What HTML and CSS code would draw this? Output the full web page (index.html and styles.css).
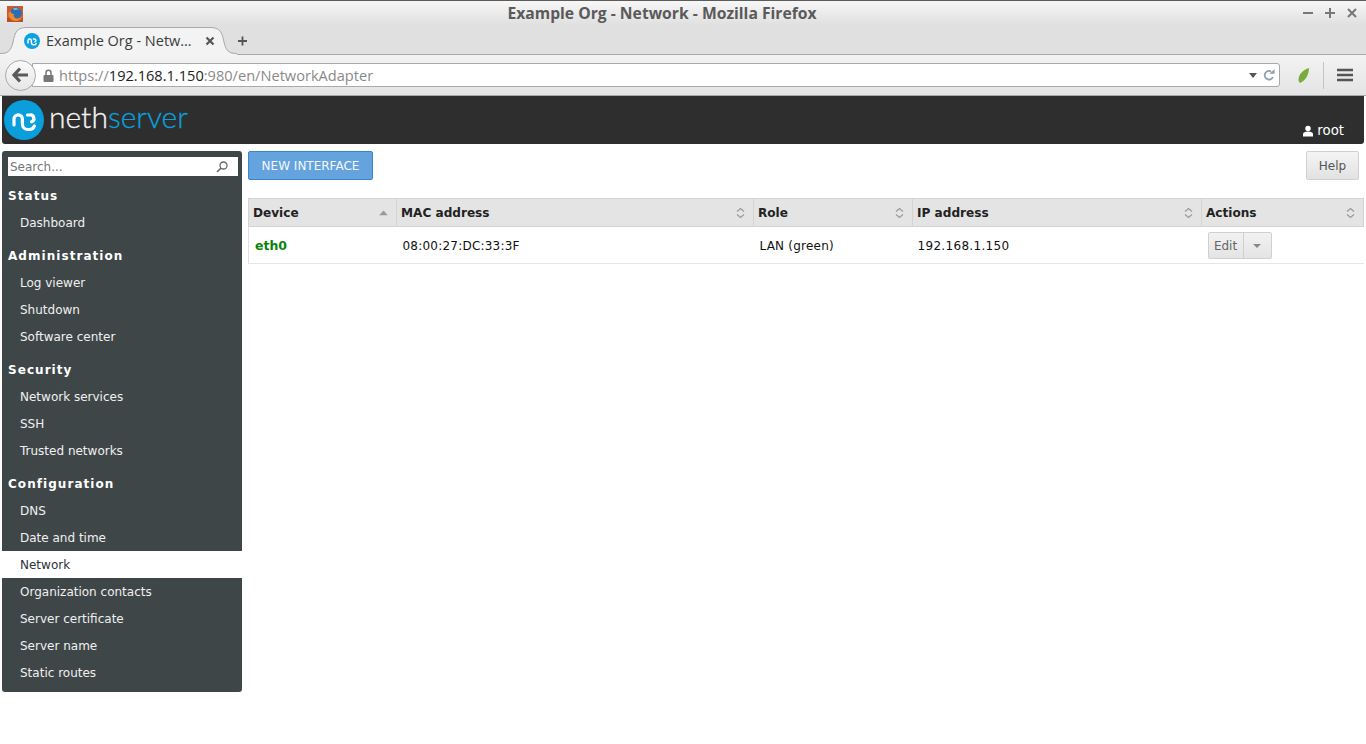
FILE: index.html
```html
<!DOCTYPE html>
<html lang="en">
<head>
<meta charset="utf-8">
<title>Example Org - Network - Mozilla Firefox</title>
<link rel="stylesheet" href="styles.css">
</head>
<body>
<div class="titlebar">
  <svg class="ff-icon" width="16" height="16" viewBox="0 0 16 16"><rect width="16" height="16" fill="#cf5a2c"/><rect y="12" width="16" height="4" fill="#b5502c"/><circle cx="9" cy="7" r="5.800" fill="#2a6db3"/><path d="M6 2.500c2-1 5-.5 6.500 1.500-2-.8-4-.5-5 .5z" fill="#7fb2de"/><path d="M1.500 7c-.5 4.500 3 8 7.500 8 3.500 0 6-2.500 6.500-5.500-1 2-3 3.500-5.500 3-2.500-.3-3.800-2.500-3-4.500C5 8 3.500 7 3.500 5z" fill="#ee8a2c"/></svg>
  <div class="win-title">Example Org - Network - Mozilla Firefox</div>
  <div class="win-controls">
    <svg width="10" height="10" viewBox="0 0 10 10"><path d="M0 5h10" stroke="#777" stroke-width="2"/></svg>
    <svg width="10" height="10" viewBox="0 0 10 10"><path d="M0 5h10M5 0v10" stroke="#777" stroke-width="2"/></svg>
    <svg width="10" height="10" viewBox="0 0 10 10"><path d="M1 1l8 8M9 1l-8 8" stroke="#777" stroke-width="2"/></svg>
  </div>
</div>
<div class="tabbar">
  <div class="tab">
    <svg class="tab-shape" width="237" height="28" viewBox="0 0 237 28"><path d="M0 27C8 27 11 24 13 15 15 5 17 .5 27 .5H210C220 .5 222 5 224 15 226 24 229 27 237 27V28H0z" fill="#f3f3f3"/><path d="M0 26.500C8 26.500 11 24 13 15 15 5 17 .5 27 .5H210C220 .5 222 5 224 15 226 24 229 26.500 237 26.500" fill="none" stroke="#a9a9a9"/></svg>
    <svg class="favicon" width="16" height="16" viewBox="0 0 40 40"><circle cx="20" cy="20" r="20" fill="#0ca2df"/><path d="M10 25V19a4.200 4.200 0 0 1 8.400 0V24a5.500 5.500 0 0 0 5.500 5.500h1a5.500 5.500 0 0 0 5.500-3.500M23.500 15h2.500a3.500 3.500 0 0 1 1.500 6.800" fill="none" stroke="#fff" stroke-width="3.600" stroke-linecap="round"/></svg>
    <span class="tab-label">Example Org - Netw…</span>
    <svg class="tab-close" width="10" height="10" viewBox="0 0 10 10"><path d="M1.500 1.500l7 7M8.500 1.500l-7 7" stroke="#555" stroke-width="2.200"/></svg>
  </div>
  <svg class="new-tab" width="10" height="10" viewBox="0 0 10 10"><path d="M0 5h9M4.500 0.500v9" stroke="#555" stroke-width="1.800"/></svg>
</div>
<div class="navbar">
  <div class="back-btn"><svg width="18" height="16" viewBox="0 0 18 16"><path d="M8 1.500L2 8l6 6.500M2.500 8H16" fill="none" stroke="#5a5a5a" stroke-width="3.200"/></svg></div>
  <div class="urlbar">
    <svg class="lock" width="11" height="13" viewBox="0 0 11 13"><path d="M3 6V3.800a2.500 2.500 0 0 1 5 0V6" fill="none" stroke="#777" stroke-width="1.500"/><rect x="0.500" y="6" width="10" height="7" rx="1" fill="#777"/></svg>
    <span class="url"><span class="url-dim">https://</span>192.168.1.150<span class="url-dim">:980/en/NetworkAdapter</span></span>
    <svg class="drop" width="8" height="5" viewBox="0 0 8 5"><path d="M0 0h8L4 5z" fill="#555"/></svg>
    <svg width="12" height="12" viewBox="0 0 14 14"><path d="M11.500 9.500A5 5 0 1 1 9.500 3" fill="none" stroke="#8f9cab" stroke-width="2"/><path d="M7.500 5.500h6v-5.500z" fill="#8f9cab"/></svg>
  </div>
  <svg class="leaf" width="12" height="15" viewBox="0 0 12 15"><path d="M11 0C5 2 1 6 .500 11c0 2 .500 3 1.500 4C7 13 11 7 11 0z" fill="#7aab3c"/></svg>
  <div class="nav-sep"></div>
  <svg class="menu" width="16" height="14" viewBox="0 0 16 14"><path d="M0 2h16M0 7h16M0 12h16" stroke="#555" stroke-width="2.400"/></svg>
</div>
<header class="app-header">
  <svg class="logo-mark" width="40" height="40" viewBox="0 0 40 40"><circle cx="20" cy="20" r="20" fill="#0a9fdc"/><path d="M10 25V19a4.200 4.200 0 0 1 8.400 0V24a5.500 5.500 0 0 0 5.500 5.500h1a5.500 5.500 0 0 0 5.500-3.500M23.500 15h2.500a3.500 3.500 0 0 1 1.500 6.800" fill="none" stroke="#fff" stroke-width="3.200" stroke-linecap="round"/></svg>
  <div class="logo-text">neth<span class="logo-accent">server</span></div>
  <div class="user">
    <svg width="10" height="12" viewBox="0 0 11 12"><circle cx="5.500" cy="3.200" r="3" fill="#fff"/><path d="M0 12V9.500C0 7.500 2 6.500 5.500 6.500S11 7.500 11 9.500V12z" fill="#fff"/></svg>
    <span>root</span>
  </div>
</header>
<div class="page">
  <nav class="sidebar">
    <div class="search"><span>Search...</span>
      <svg width="12" height="12" viewBox="0 0 12 12"><circle cx="7.500" cy="4.500" r="3.500" fill="none" stroke="#666" stroke-width="1.300"/><path d="M5 7l-4 4" stroke="#666" stroke-width="1.600"/></svg>
    </div>
    <div class="group">Status</div>
    <a class="item">Dashboard</a>
    <div class="group">Administration</div>
    <a class="item">Log viewer</a>
    <a class="item">Shutdown</a>
    <a class="item">Software center</a>
    <div class="group">Security</div>
    <a class="item">Network services</a>
    <a class="item">SSH</a>
    <a class="item">Trusted networks</a>
    <div class="group">Configuration</div>
    <a class="item">DNS</a>
    <a class="item">Date and time</a>
    <a class="item active">Network</a>
    <a class="item">Organization contacts</a>
    <a class="item">Server certificate</a>
    <a class="item">Server name</a>
    <a class="item">Static routes</a>
  </nav>
  <main class="main">
    <div class="toolbar">
      <button class="btn-primary">NEW INTERFACE</button>
      <button class="btn-help">Help</button>
    </div>
    <table class="grid">
      <colgroup><col class="c1"><col class="c2"><col class="c3"><col class="c4"><col class="c5"></colgroup>
      <thead>
        <tr>
          <th>Device<svg class="sort" width="9" height="5" viewBox="0 0 9 5"><path d="M0 5L4.500 0 9 5z" fill="#999"/></svg></th>
          <th>MAC address<svg class="sort" width="9" height="11" viewBox="0 0 9 11"><path d="M1 4l3.500-3L8 4M1 7l3.500 3L8 7" fill="none" stroke="#999" stroke-width="1.200"/></svg></th>
          <th>Role<svg class="sort" width="9" height="11" viewBox="0 0 9 11"><path d="M1 4l3.500-3L8 4M1 7l3.500 3L8 7" fill="none" stroke="#999" stroke-width="1.200"/></svg></th>
          <th>IP address<svg class="sort" width="9" height="11" viewBox="0 0 9 11"><path d="M1 4l3.500-3L8 4M1 7l3.500 3L8 7" fill="none" stroke="#999" stroke-width="1.200"/></svg></th>
          <th>Actions<svg class="sort" width="9" height="11" viewBox="0 0 9 11"><path d="M1 4l3.500-3L8 4M1 7l3.500 3L8 7" fill="none" stroke="#999" stroke-width="1.200"/></svg></th>
        </tr>
      </thead>
      <tbody>
        <tr>
          <td class="dev">eth0</td>
          <td>08:00:27:DC:33:3F</td>
          <td>LAN (green)</td>
          <td class="ip">192.168.1.150</td>
          <td class="acts"><div class="split"><span class="split-edit">Edit</span><span class="split-arrow"><svg width="8" height="4" viewBox="0 0 8 4"><path d="M0 0h8L4 4z" fill="#888"/></svg></span></div></td>
        </tr>
      </tbody>
    </table>
  </main>
</div>
</body>
</html>
```
FILE: styles.css
```css
* { box-sizing: border-box; }
html, body { margin: 0; padding: 0; }
body { background: #fff; width: 1366px; height: 744px; overflow: hidden; font-family: "DejaVu Sans", sans-serif; font-size: 12px; color: #222; }

.titlebar { height: 27px; border-top: 1px solid #5c5c5c; background: linear-gradient(#f7f7f7 0, #e0e0e0 24px); display: flex; align-items: center; padding: 0 9px 0 7px; position: relative; }
.ff-icon { flex: none; margin-top: -1px; }
.win-title { flex: 1; text-align: center; font: bold 15.700px "Open Sans", sans-serif; color: #5a5a5a; margin-top: -3px; padding-right: 2px; }
.win-controls { display: flex; gap: 12px; margin-top: -3px; }

.tabbar { height: 28px; background: #e0e0e0; border-bottom: 1px solid #a9a9a9; display: flex; align-items: center; }
.tab { width: 232px; height: 27px; position: relative; display: flex; align-items: center; padding: 0 17px 0 24px; }
.tab-shape { position: absolute; left: 0; top: 0; }
.favicon { position: relative; flex: none; }
.tab-label { position: relative; font: 14.500px "Open Sans", sans-serif; color: #3c3c3c; margin-left: 6px; flex: 1; white-space: nowrap; }
.tab-close { position: relative; flex: none; }
.new-tab { margin-left: 6px; margin-top: 1px; }

.navbar { height: 41px; background: linear-gradient(#f3f3f3, #e4e4e4); border-bottom: 1px solid #a9a9a9; display: flex; align-items: center; padding-left: 5px; position: relative; }
.back-btn { width: 31px; height: 31px; border-radius: 50%; background: linear-gradient(#fafafa, #e6e6e6); border: 1px solid #a9a9a9; display: flex; align-items: center; justify-content: center; position: relative; z-index: 1; flex: none; }
.urlbar { width: 1248px; height: 24px; margin-left: -4px; background: #fff; border: 1px solid #a9a9a9; border-radius: 0 3px 3px 0; display: flex; align-items: center; padding: 0 4px 0 10px; }
.lock { flex: none; }
.url { flex: 1; margin-left: 5px; font: 14.600px "Open Sans", sans-serif; color: #222; white-space: nowrap; }
.url-dim { color: #8a8a8a; }
.drop { margin-right: 6px; }
.leaf { margin-left: 18px; flex: none; }
.nav-sep { width: 1px; height: 27px; background: #c4c4c4; margin-left: 13px; flex: none; }
.menu { margin-left: 13px; flex: none; }

.app-header { height: 48px; margin: 0 2px; background: #2e2e2e; border-radius: 0 0 3px 3px; display: flex; position: relative; padding-left: 2px; align-items: center; }
.logo-mark { flex: none; }
.logo-text { font: 300 30px Lato, sans-serif; color: #f4f4f4; margin-left: 5px; margin-top: -8px; line-height: 36px; -webkit-text-stroke: 0.300px currentColor; }
.logo-accent { color: #0a9fdc; }
.user { margin-left: auto; margin-right: 20px; align-self: flex-end; margin-bottom: 6px; display: flex; align-items: center; gap: 4px; color: #fff; font-size: 13.300px; }

.page { display: flex; padding: 7px 2px 0; gap: 6px; align-items: flex-start; }
.sidebar { width: 240px; flex: none; background: #3f4648; border-radius: 3px; padding: 6px 0; }
.search { height: 19px; margin: 0 4px 6px 6px; background: #fff; display: flex; align-items: center; justify-content: space-between; padding: 0 10px 0 2px; color: #777; }
.group { height: 27px; line-height: 27px; padding: 1px 0 0 6px; font-weight: bold; font-size: 12px; letter-spacing: 1.050px; color: #fff; margin-top: 6px; }
.search + .group { margin-top: 0; }
.item { display: block; height: 27px; line-height: 27px; padding: 1px 0 0 18px; color: #f0f0f0; }
.item.active { background: #fff; color: #2a3338; }

.main { flex: 1; min-width: 0; }
.toolbar { display: flex; justify-content: space-between; align-items: flex-start; height: 47px; }
.btn-primary { width: 125px; height: 29px; background: #64a3de; border: 1px solid #3d84cf; border-radius: 2px; color: #f4f8fc; font: 12px "DejaVu Sans", sans-serif; padding: 0; }
.btn-help { width: 53px; height: 29px; background: linear-gradient(#f4f4f4, #e2e2e2); border: 1px solid #d0d0d0; border-radius: 2px; color: #555; font: 12px "DejaVu Sans", sans-serif; padding: 0; margin-right: 5px; }

.grid { width: 1115px; table-layout: fixed; border-collapse: collapse; border-left: 1px solid #e0e0e0; }
.c1 { width: 148px; } .c2 { width: 357px; } .c3 { width: 159px; } .c4 { width: 289px; } .c5 { width: 162px; }
.grid th { height: 28px; background: #e4e4e4; border: 1px solid #d4d4d4; text-align: left; padding: 0 12px 0 4px; font-size: 12.100px; position: relative; color: #222; }
.sort { position: absolute; right: 8px; top: 50%; transform: translateY(-50%); }
.grid td { height: 37px; padding: 1px 6px 0; border-bottom: 1px solid #e6e6e6; color: #111; letter-spacing: 0.220px; }
.grid td.ip { padding-left: 5px; letter-spacing: 0.320px; }
.grid td.dev { color: #0a830a; font-weight: bold; font-size: 12.500px; letter-spacing: 0; }
.grid td.acts { padding: 1px 0 0 6px; letter-spacing: 0; }
.split { display: inline-flex; height: 27px; border: 1px solid #d0d0d0; border-radius: 2px; background: linear-gradient(#f2f2f2, #e4e4e4); align-items: center; vertical-align: middle; }
.split-edit { width: 35px; text-align: center; color: #666; line-height: 27px; border-right: 1px solid #cfcfcf; height: 25px; }
.split-arrow { width: 27px; display: flex; justify-content: center; align-items: center; }
```
